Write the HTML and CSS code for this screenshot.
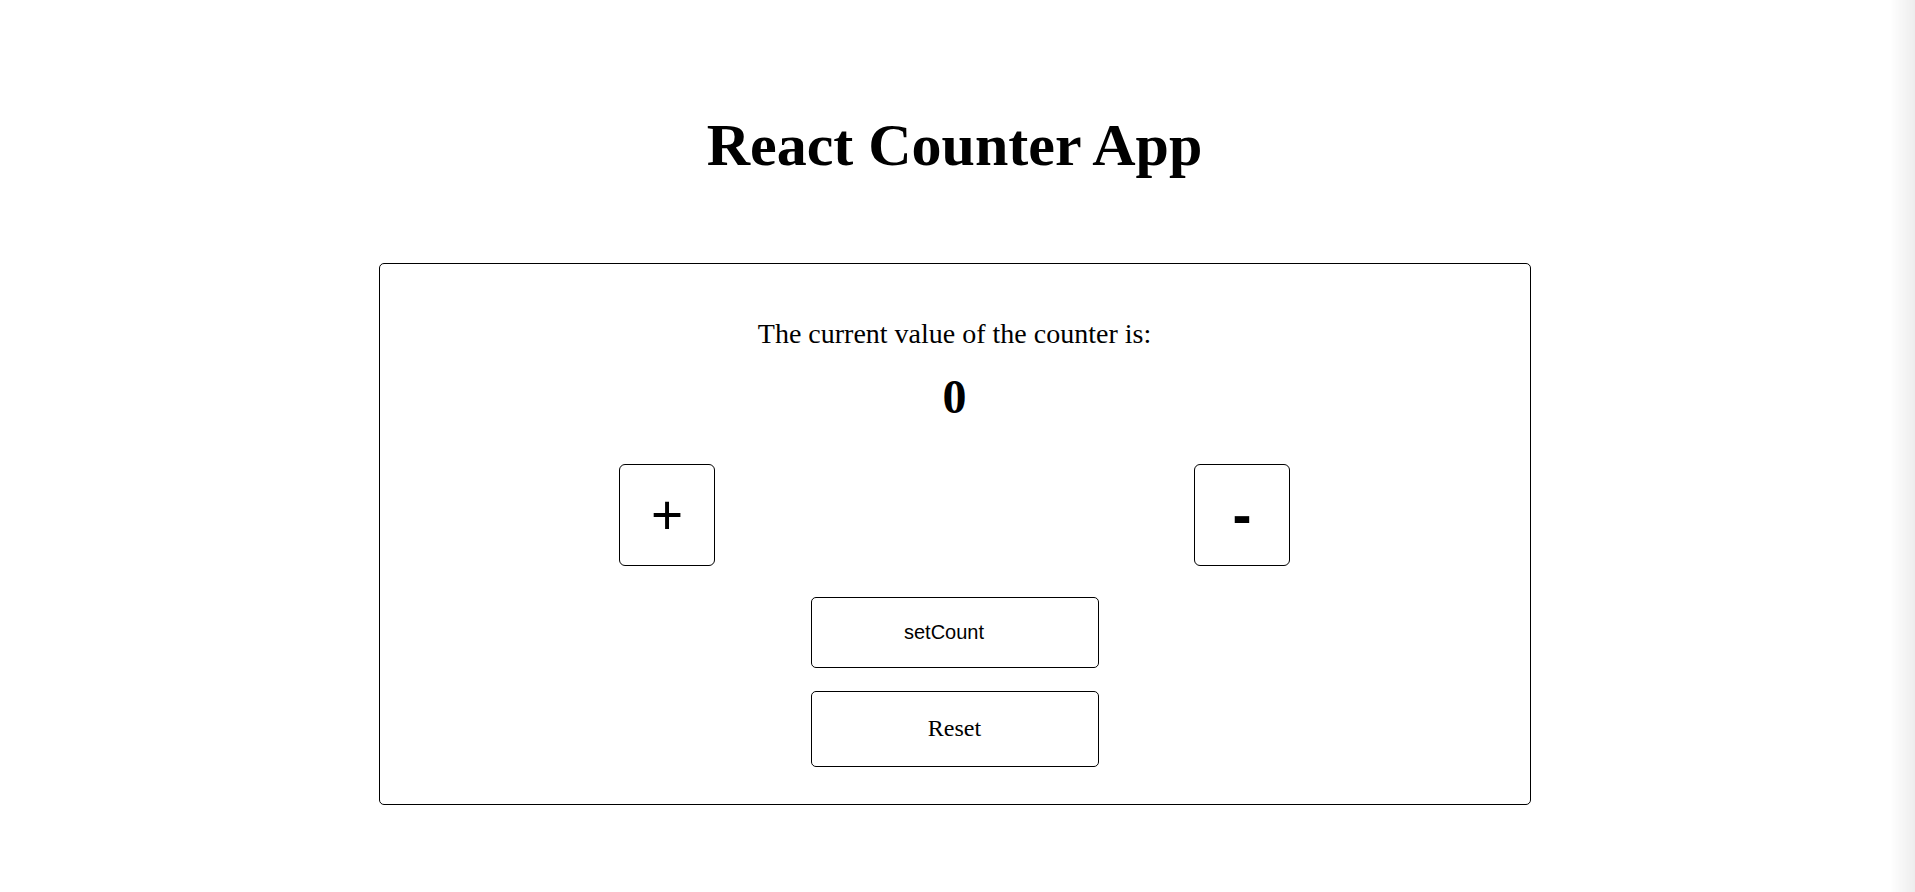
FILE: index.html
```html
<!DOCTYPE html>
<html lang="en">
<head>
<meta charset="utf-8">
<title>React Counter App</title>
<link rel="stylesheet" href="styles.css">
</head>
<body>
  <div class="app">
    <h1 class="title">React Counter App</h1>
    <div class="card">
      <p class="label">The current value of the counter is:</p>
      <h2 class="count">0</h2>
      <div class="step-row">
        <button class="step">+</button>
        <button class="step step-minus">-</button>
      </div>
      <button class="wide wide-sans">setCount</button>
      <button class="wide wide-serif">Reset</button>
    </div>
  </div>
  <div class="edge-shade"></div>
</body>
</html>
```
FILE: styles.css
```css
html, body {
  margin: 0;
  background: #ffffff;
}

body {
  padding-right: 6px;
  color: #000000;
  font-family: "Liberation Serif", "Times New Roman", serif;
}

.app {
  display: flex;
  flex-direction: column;
  align-items: center;
  padding-top: 111px;
}

.title {
  margin: 0;
  font-size: 60px;
  font-weight: bold;
  line-height: 1.15;
  text-align: center;
}

.card {
  box-sizing: border-box;
  width: 1152px;
  margin-top: 83px;
  border: 1px solid #000000;
  border-radius: 5px;
  padding: 54px 0 37px;
  display: flex;
  flex-direction: column;
  align-items: center;
}

.label {
  margin: 0;
  font-size: 28px;
  line-height: 1.15;
}

.count {
  margin: 19px 0 0;
  font-size: 48px;
  font-weight: bold;
  line-height: 1.15;
}

.step-row {
  align-self: stretch;
  display: flex;
  justify-content: space-around;
  margin-top: 40px;
}

.step {
  box-sizing: border-box;
  width: 96px;
  height: 102px;
  padding: 0;
  border: 1px solid #000000;
  border-radius: 6px;
  background: #ffffff;
  color: #000000;
  font-family: "Liberation Sans", Arial, sans-serif;
  font-size: 55px;
  line-height: 1;
  display: flex;
  align-items: center;
  justify-content: center;
}

.step-minus {
  font-size: 57px;
  font-weight: bold;
}

.wide {
  box-sizing: border-box;
  width: 288px;
  border: 1px solid #000000;
  border-radius: 5px;
  background: #ffffff;
  color: #000000;
  line-height: 1.15;
}

.wide-sans {
  margin-top: 31px;
  padding: 23px 21px 23px 0;
  font-family: "Liberation Sans", Arial, sans-serif;
  font-size: 20px;
}

.wide-serif {
  margin-top: 23px;
  padding: 23px 0;
  font-family: "Liberation Serif", "Times New Roman", serif;
  font-size: 24px;
}

.edge-shade {
  position: fixed;
  top: 0;
  right: 0;
  width: 25px;
  height: 100%;
  background: linear-gradient(to right, rgba(0, 0, 0, 0), rgba(0, 0, 0, 0.07));
  pointer-events: none;
}
```
